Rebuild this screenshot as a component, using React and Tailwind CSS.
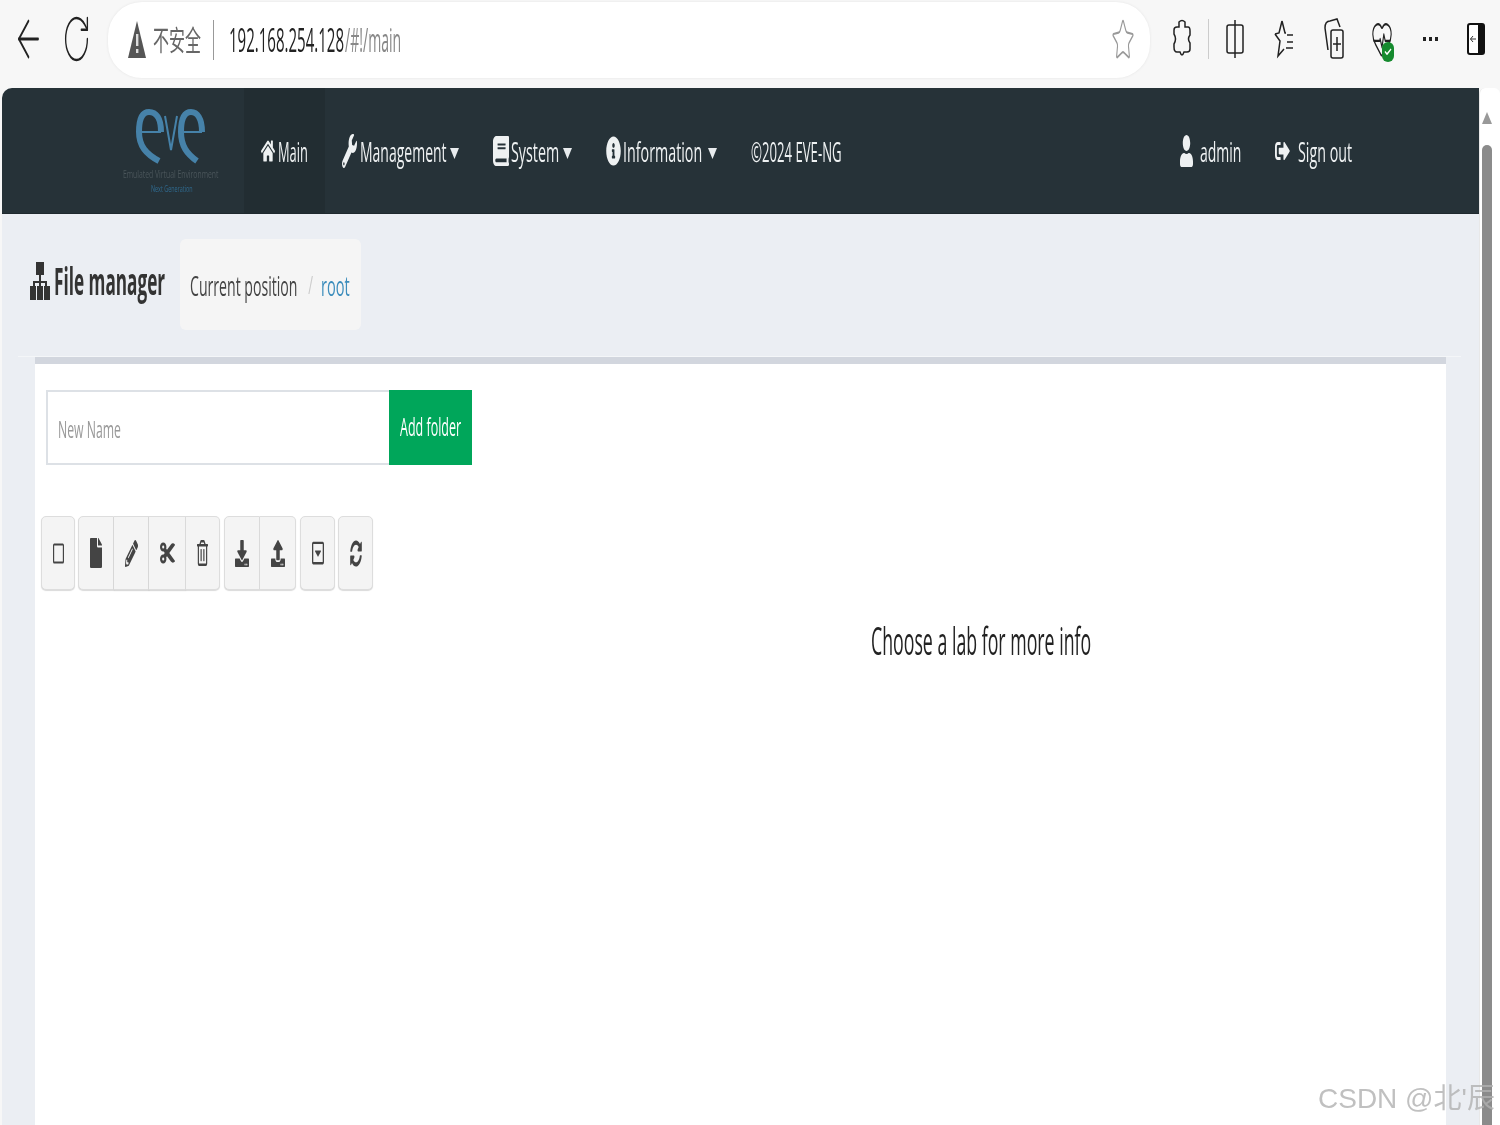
import React from "react";
import { ArrowLeft, RotateCw, Star, HeartPulse, Check } from "lucide-react";
import {
  FaHome,
  FaWrench,
  FaBook,
  FaInfoCircle,
  FaUser,
  FaRegSquare,
  FaFile,
  FaPencilAlt,
  FaCut,
  FaRegTrashAlt,
  FaDownload,
  FaUpload,
  FaRegCaretSquareDown,
  FaSyncAlt,
  FaSignOutAlt,
} from "react-icons/fa";

const font = { fontFamily: '"Open Sans", "Noto Sans CJK SC", sans-serif' };

// the screenshot is squeezed sideways, so text keeps its box width and gets scaled inside it
const Sq = ({ w, s, children, className = "" }) => (
  <span className={`block shrink-0 ${w} ${className}`}>
    <span className={`inline-block origin-left whitespace-nowrap ${s}`}>{children}</span>
  </span>
);

const NavItem = ({ active, children }) => (
  <div className={`flex items-center h-full px-[17px] ${active ? "bg-[#222d32]" : ""}`}>{children}</div>
);

const Caret = () => (
  <svg width="9" height="11" viewBox="0 0 9 11" className="ml-[5px] mt-[5px] shrink-0">
    <path d="M0 0 H9 L4.5 11 Z" fill="#e8ecee" />
  </svg>
);

const ToolBtn = ({ w, Icon, size, grouped }) => (
  <button className={`${w} h-[74px] flex items-center justify-center bg-[#f4f4f4] border border-[#dddddd] text-[#444] shadow-[0_1px_1px_rgba(0,0,0,0.15)] ${grouped}`}>
    <Icon className={size} preserveAspectRatio="none" />
  </button>
);

const EveLogo = () => (
  <svg width="72" height="56" viewBox="0 0 72 56" fill="none" stroke="#4682a9" strokeWidth="6">
    <path d="M27 24 C27 10 22 4 15 4 C8 4 5 12 5 24 C5 38 12 46 25 53" />
    <path d="M6 24 H27" strokeWidth="2" />
    <path d="M31 8 L37 42 L43 8" strokeWidth="2" />
    <path d="M68 24 C68 10 63 4 57 4 C50 4 47 12 47 24 C47 38 53 46 63 53" />
    <path d="M48 24 H68" strokeWidth="2" />
  </svg>
);

const TopBar = () => (
  <div className="h-[88px] flex items-start shrink-0 bg-[#f7f7f7]">
    <div className="w-[108px] h-[78px] flex items-center pl-[12px] text-[#222]">
      <ArrowLeft className="w-[33px] h-[62px] shrink-0" strokeWidth={1.1} preserveAspectRatio="none" />
      <RotateCw className="w-[29px] h-[56px] ml-[17px] shrink-0" strokeWidth={1.1} preserveAspectRatio="none" />
    </div>
    <div className="w-[1042px] h-[76px] mt-[2px] bg-white rounded-[34px] shadow-[0_0_3px_rgba(0,0,0,0.08)] flex items-center pl-[20px] pr-[15px]">
      <svg width="18" height="38" viewBox="0 0 18 38" className="shrink-0">
        <path d="M9 0 L18 37 H0 Z" fill="#555" />
        <rect x="8" y="13" width="2.4" height="12" fill="#ddd" />
        <rect x="8" y="28" width="2.4" height="4" fill="#ddd" />
      </svg>
      <Sq w="w-[48px] ml-[7px]" s="scale-x-[0.57] text-[28px] text-[#666]">不安全</Sq>
      <div className="w-px h-[40px] bg-[#999] ml-[12px]" />
      <div className="flex ml-[15px] text-[32px]">
        <Sq w="w-[116px]" s="scale-x-[0.47] text-[#222]">192.168.254.128</Sq>
        <Sq w="w-[56px]" s="scale-x-[0.44] text-[#888]">/#!/main</Sq>
      </div>
      <Star className="w-[24px] h-[46px] ml-auto text-[#999]" strokeWidth={1.1} preserveAspectRatio="none" />
    </div>
    <div className="flex-1 h-[78px] flex items-center pl-[23px] text-[#222] relative">
      <svg width="18" height="40" viewBox="0 0 18 40" fill="none" stroke="#222" strokeWidth="1.5" className="shrink-0">
        <path d="M6 3 Q9 0 12 3 L12 8 L15 8 Q17 8 17 12 L17 16 Q14 20 17 24 L17 30 Q17 33 14 33 L11 33 Q9 39 7 33 L4 33 Q1 33 1 28 L1 25 Q4 20 1 15 L1 11 Q1 8 4 8 L6 8 Z" />
      </svg>
      <div className="w-px h-[40px] bg-[#ccc] ml-[17px]" />
      <svg width="18" height="40" viewBox="0 0 18 40" fill="none" stroke="#222" strokeWidth="1.5" className="ml-[17px] shrink-0">
        <rect x="1" y="6" width="16" height="28" rx="2" />
        <path d="M9 1 V39" />
      </svg>
      <svg width="20" height="40" viewBox="0 0 20 40" fill="none" stroke="#222" strokeWidth="1.5" className="ml-[30px] shrink-0">
        <path d="M8 2 L11 14 L12 14 M1 15 L6 22 L4 37 L10 30 M8 2 L5 14 L1 15" />
        <path d="M13 16 H19 M13 23 H19 M12 29 H19" />
      </svg>
      <svg width="20" height="42" viewBox="0 0 20 42" fill="none" stroke="#222" strokeWidth="1.5" className="ml-[30px] shrink-0">
        <path d="M4 32 L1 10 Q1 3 6 3 L13 1 L16 9" />
        <rect x="7" y="12" width="12" height="28" rx="2" />
        <path d="M13 19 V33 M9 26 H17" />
      </svg>
      <div className="relative ml-[27px] shrink-0">
        <HeartPulse className="w-[22px] h-[44px]" strokeWidth={1.2} preserveAspectRatio="none" />
        <div className="absolute left-[11px] top-[25px] w-[12px] h-[20px] rounded-full bg-[#158a2e] flex items-center justify-center">
          <Check className="w-[8px] h-[10px] text-white" strokeWidth={4} preserveAspectRatio="none" />
        </div>
      </div>
      <div className="flex gap-[3px] ml-[30px] shrink-0">
        <div className="w-[3px] h-[4px] bg-[#222]" />
        <div className="w-[3px] h-[4px] bg-[#222]" />
        <div className="w-[3px] h-[4px] bg-[#222]" />
      </div>
      <svg width="18" height="32" viewBox="0 0 18 32" className="ml-[29px] shrink-0">
        <rect x="1" y="1" width="16" height="30" rx="2" fill="#fff" stroke="#111" strokeWidth="2" />
        <rect x="11" y="1" width="6" height="30" fill="#111" />
        <path d="M3.5 16 H9 M3.5 16 L6 13 M3.5 16 L6 19" stroke="#333" strokeWidth="1" fill="none" />
      </svg>
    </div>
  </div>
);

const Navbar = () => (
  <div className="h-[126px] bg-[#263238] rounded-tl-[10px] flex border-b border-[#1f292e] shrink-0 text-[#eef1f2] text-[28px]">
    <div className="w-[242px] pl-[121px] pt-[20px] shrink-0">
      <div className="pl-[11px] h-[56px]">
        <EveLogo />
      </div>
      <Sq w="w-[96px] -mt-[4px] h-[14px] leading-[14px]" s="scale-x-[0.62] text-[11px] text-[#4a555a]">Emulated Virtual Environment</Sq>
      <Sq w="w-[96px] pl-[28px] mt-[1px] h-[12px] leading-[12px]" s="scale-x-[0.6] text-[9px] text-[#2f6a8f]">Next Generation</Sq>
    </div>
    <NavItem active>
      <FaHome className="w-[14px] h-[24px] mr-[3px]" preserveAspectRatio="none" />
      <Sq w="w-[30px]" s="scale-x-[0.46]">Main</Sq>
    </NavItem>
    <NavItem>
      <FaWrench className="w-[15px] h-[34px] mr-[3px]" preserveAspectRatio="none" />
      <Sq w="w-[85px]" s="scale-x-[0.5]">Management</Sq>
      <Caret />
    </NavItem>
    <NavItem>
      <FaBook className="w-[16px] h-[30px] mr-[2px]" preserveAspectRatio="none" />
      <Sq w="w-[47px]" s="scale-x-[0.51]">System</Sq>
      <Caret />
    </NavItem>
    <NavItem>
      <FaInfoCircle className="w-[15px] h-[30px] mr-[2px]" preserveAspectRatio="none" />
      <Sq w="w-[80px]" s="scale-x-[0.51]">Information</Sq>
      <Caret />
    </NavItem>
    <NavItem>
      <Sq w="w-[92px]" s="scale-x-[0.47]">©2024 EVE-NG</Sq>
    </NavItem>
    <div className="flex items-center ml-[320px]">
      <FaUser className="w-[13px] h-[32px] mr-[7px]" preserveAspectRatio="none" />
      <Sq w="w-[41px]" s="scale-x-[0.5]">admin</Sq>
      <FaSignOutAlt className="w-[15px] h-[24px] ml-[34px] mr-[8px]" preserveAspectRatio="none" />
      <Sq w="w-[54px]" s="scale-x-[0.51]">Sign out</Sq>
    </div>
  </div>
);

const Toolbar = () => (
  <div className="flex gap-[3px] mt-[51px] -ml-[5px]">
    <ToolBtn w="w-[34px]" Icon={FaRegSquare} size="w-[11px] h-[23px]" grouped="rounded-[5px]" />
    <div className="flex">
      <ToolBtn w="w-[36px]" Icon={FaFile} size="w-[12px] h-[30px]" grouped="rounded-l-[5px]" />
      <ToolBtn w="w-[35px]" Icon={FaPencilAlt} size="w-[13px] h-[27px]" grouped="border-l-0" />
      <ToolBtn w="w-[37px]" Icon={FaCut} size="w-[15px] h-[24px]" grouped="border-l-0" />
      <ToolBtn w="w-[34px]" Icon={FaRegTrashAlt} size="w-[11px] h-[26px]" grouped="border-l-0 rounded-r-[5px]" />
    </div>
    <div className="flex ml-[1px]">
      <ToolBtn w="w-[36px]" Icon={FaDownload} size="w-[14px] h-[27px]" grouped="rounded-l-[5px]" />
      <ToolBtn w="w-[36px]" Icon={FaUpload} size="w-[14px] h-[27px]" grouped="border-l-0 rounded-r-[5px]" />
    </div>
    <ToolBtn w="w-[35px]" Icon={FaRegCaretSquareDown} size="w-[12px] h-[26px]" grouped="rounded-[5px] ml-[1px]" />
    <ToolBtn w="w-[35px]" Icon={FaSyncAlt} size="w-[12px] h-[27px]" grouped="rounded-[5px]" />
  </div>
);

const App = () => (
  <div className="w-[1500px] h-[1125px] overflow-hidden flex flex-col bg-[#f7f7f7] relative blur-[0.4px]" style={font}>
    <TopBar />
    <div className="flex flex-1 min-h-0">
      <div className="w-[1479px] pl-[2px] flex flex-col shrink-0">
        <Navbar />
        <div className="flex-1 bg-[#ebeef3] flex flex-col min-h-0">
          <div className="h-[142px] shrink-0 pt-[25px] pl-[28px] flex items-start">
            <div className="flex items-center h-[91px] w-[150px] -mt-[4px]">
              <svg width="20" height="38" viewBox="0 0 20 38" fill="#333" className="shrink-0">
                <rect x="6" y="0" width="8" height="13" />
                <rect x="9" y="13" width="2" height="8" />
                <rect x="3" y="19" width="14" height="2" />
                <rect x="3" y="19" width="2" height="5" />
                <rect x="15" y="19" width="2" height="5" />
                <rect x="9" y="19" width="2" height="5" />
                <rect x="0" y="24" width="6" height="14" />
                <rect x="7" y="24" width="6" height="14" />
                <rect x="14" y="24" width="6" height="14" />
              </svg>
              <Sq w="w-[111px] ml-[4px]" s="scale-x-[0.452] text-[38px] font-bold text-[#333]">File manager</Sq>
            </div>
            <div className="h-[91px] w-[181px] bg-[#f5f5f5] rounded-[6px] flex items-center pl-[10px] text-[28px]">
              <Sq w="w-[108px]" s="scale-x-[0.504] text-[#444]">Current position</Sq>
              <span className="text-[#ccc] ml-[9px] w-[5px] scale-x-50 text-[26px]">/</span>
              <Sq w="w-[29px] ml-[9px]" s="scale-x-[0.52] text-[#3c8dbc]">root</Sq>
            </div>
          </div>
          <div className="flex-1 ml-[16px] mr-[18px] border-t border-[#f4f6f8] min-h-0">
            <div className="ml-[17px] w-[1411px] h-full bg-white border-t-[7px] border-[#d2d6de] flex">
              <div className="w-[515px] pl-[11px] pt-[26px] shrink-0">
                <div className="flex h-[75px]">
                  <div className="w-[343px] border-2 border-[#dde1e6] border-r-0 flex items-center pl-[10px] pt-[2px] text-[#999] text-[24px]">
                    <Sq w="w-[64px]" s="scale-x-[0.51]">New Name</Sq>
                  </div>
                  <div className="w-[83px] bg-[#00a65a] text-white flex items-center justify-center text-[25px]">
                    <Sq w="w-[61px] -mt-[2px]" s="scale-x-[0.5]">Add folder</Sq>
                  </div>
                </div>
                <Toolbar />
              </div>
              <div className="w-[862px] pt-[248px] text-center text-[38px] text-[#222] flex justify-center">
                <Sq w="w-[220px]" s="scale-x-[0.467]">Choose a lab for more info</Sq>
              </div>
            </div>
          </div>
        </div>
      </div>
      <div className="w-[21px] bg-white rounded-t-[6px] border-l border-[#e8e8e8] flex flex-col items-center pr-[6px] pt-[24px] shrink-0">
        <svg width="10" height="12" viewBox="0 0 10 12">
          <path d="M5 0 L10 12 H0 Z" fill="#999" />
        </svg>
        <div className="w-[10px] flex-1 mt-[21px] bg-[#8b8b8b] rounded-t-[5px]" />
      </div>
    </div>
    <div className="absolute left-[1318px] top-[1078px] text-[28px] text-[#b0b0b0]/80 whitespace-nowrap" style={{ fontFamily: '"Liberation Sans", "Noto Sans CJK SC", sans-serif' }}>
      CSDN @北'辰
    </div>
  </div>
);

export default App;
